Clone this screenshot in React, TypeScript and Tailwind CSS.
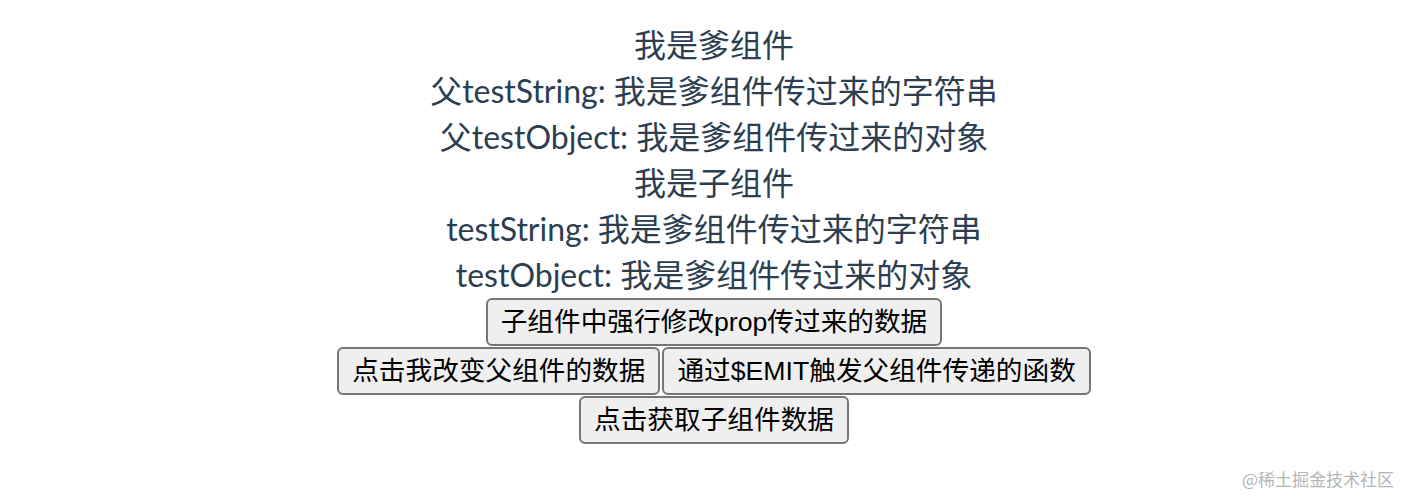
import React from "react";

const lineCls = "leading-[46px]";

function Btn({ children }: { children: React.ReactNode }) {
  return (
    <button
      className="h-[48px] px-[13px] border-2 border-[#767676] rounded-[6px] bg-[#efefef] text-black text-[26.67px] leading-[30px] whitespace-nowrap"
      style={{ fontFamily: '"Liberation Sans", "Noto Sans CJK SC", sans-serif' }}
    >
      {children}
    </button>
  );
}

export default function App() {
  return (
    <div className="relative w-[1406px] h-[496px] bg-white overflow-hidden">
      <div
        className="pt-[22px] pl-[22px] flex flex-col items-center text-[#2c3e50] text-[32px]"
        style={{ fontFamily: 'Lato, "Noto Sans CJK SC", sans-serif' }}
      >
        <div className={lineCls}>我是爹组件</div>
        <div className={lineCls}>父testString: 我是爹组件传过来的字符串</div>
        <div className={lineCls}>父testObject: 我是爹组件传过来的对象</div>
        <div className={lineCls}>我是子组件</div>
        <div className={lineCls}>testString: 我是爹组件传过来的字符串</div>
        <div className={lineCls}>testObject: 我是爹组件传过来的对象</div>
        <div className="h-[49px] flex justify-center items-start">
          <Btn>子组件中强行修改prop传过来的数据</Btn>
        </div>
        <div className="h-[49px] flex justify-center items-start gap-[2px]">
          <Btn>点击我改变父组件的数据</Btn>
          <Btn>通过$EMIT触发父组件传递的函数</Btn>
        </div>
        <div className="h-[49px] flex justify-center items-start">
          <Btn>点击获取子组件数据</Btn>
        </div>
      </div>
      <div
        className="absolute right-[12px] bottom-[6px] text-[17px] text-[#b5b5b5] leading-[22px]"
        style={{ fontFamily: '"Noto Sans CJK SC", sans-serif' }}
      >
        @稀土掘金技术社区
      </div>
    </div>
  );
}
